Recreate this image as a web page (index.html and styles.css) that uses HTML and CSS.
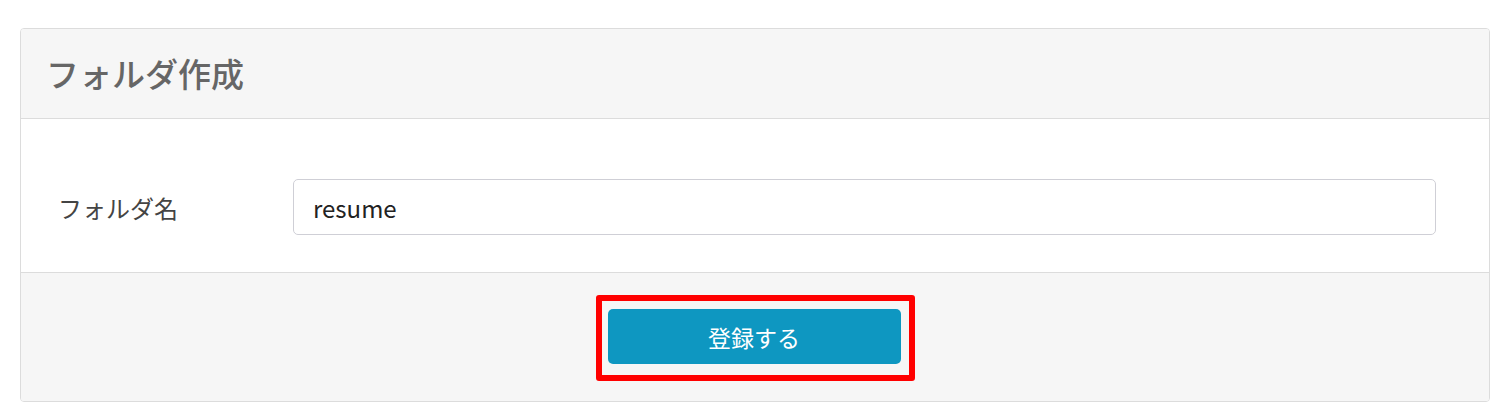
FILE: index.html
```html
<!DOCTYPE html>
<html lang="ja">
<head>
    <meta charset="UTF-8">
    <meta name="viewport" content="width=device-width, initial-scale=1.0">
    <title>フォルダ作成</title>
    <link rel="stylesheet" href="styles.css">
</head>
<body>
    <div class="panel">
        <div class="panel-cabecera">
            <h1 class="titulo">フォルダ作成</h1>
        </div>
        <div class="panel-cuerpo">
            <div class="fila">
                <label class="etiqueta" for="nombre">フォルダ名</label>
                <input class="campo" id="nombre" type="text" value="resume">
            </div>
        </div>
        <div class="panel-pie">
            <div class="marco-rojo">
                <button class="boton-registrar">登録する</button>
            </div>
        </div>
    </div>
</body>
</html>
```

FILE: styles.css
```css
body {
    margin: 0;
    padding: 28px 19px 0 20px;
    background-color: #ffffff;
    font-family: "Noto Sans CJK JP", "Noto Sans", sans-serif;
}

.panel {
    border: 1px solid #dcdcdc;
    border-radius: 4px;
    overflow: hidden;
}

.panel-cabecera {
    height: 89px;
    background-color: #f6f6f6;
    border-bottom: 1px solid #dcdcdc;
    display: flex;
    align-items: center;
    padding-left: 25px;
}

.titulo {
    margin: 0;
    font-size: 33px;
    font-weight: 500;
    color: #666666;
    line-height: 1;
}

.panel-cuerpo {
    padding: 60px 53px 37px 37px;
    border-bottom: 1px solid #dcdcdc;
}

.fila {
    display: flex;
    align-items: center;
}

.etiqueta {
    width: 235px;
    flex-shrink: 0;
    font-size: 24px;
    color: #444444;
}

.campo {
    flex: 1;
    height: 56px;
    box-sizing: border-box;
    border: 1px solid #cfcfd6;
    border-radius: 5px;
    padding: 0 19px;
    font-family: "Noto Sans CJK JP", "Noto Sans", sans-serif;
    font-size: 24px;
    color: #222222;
    outline: none;
}

.panel-pie {
    background-color: #f6f6f6;
    display: flex;
    justify-content: center;
    padding: 22px 0 20px;
}

/* recuadro rojo de resaltado */
.marco-rojo {
    border: 6px solid #ff0000;
    border-radius: 3px;
    padding: 8px 8px 11px 6px;
}

.boton-registrar {
    display: block;
    width: 293px;
    height: 55px;
    border: none;
    border-radius: 5px;
    background-color: #0e97c1;
    color: #ffffff;
    font-family: "Noto Sans CJK JP", "Noto Sans", sans-serif;
    font-size: 23px;
    cursor: pointer;
}
```
